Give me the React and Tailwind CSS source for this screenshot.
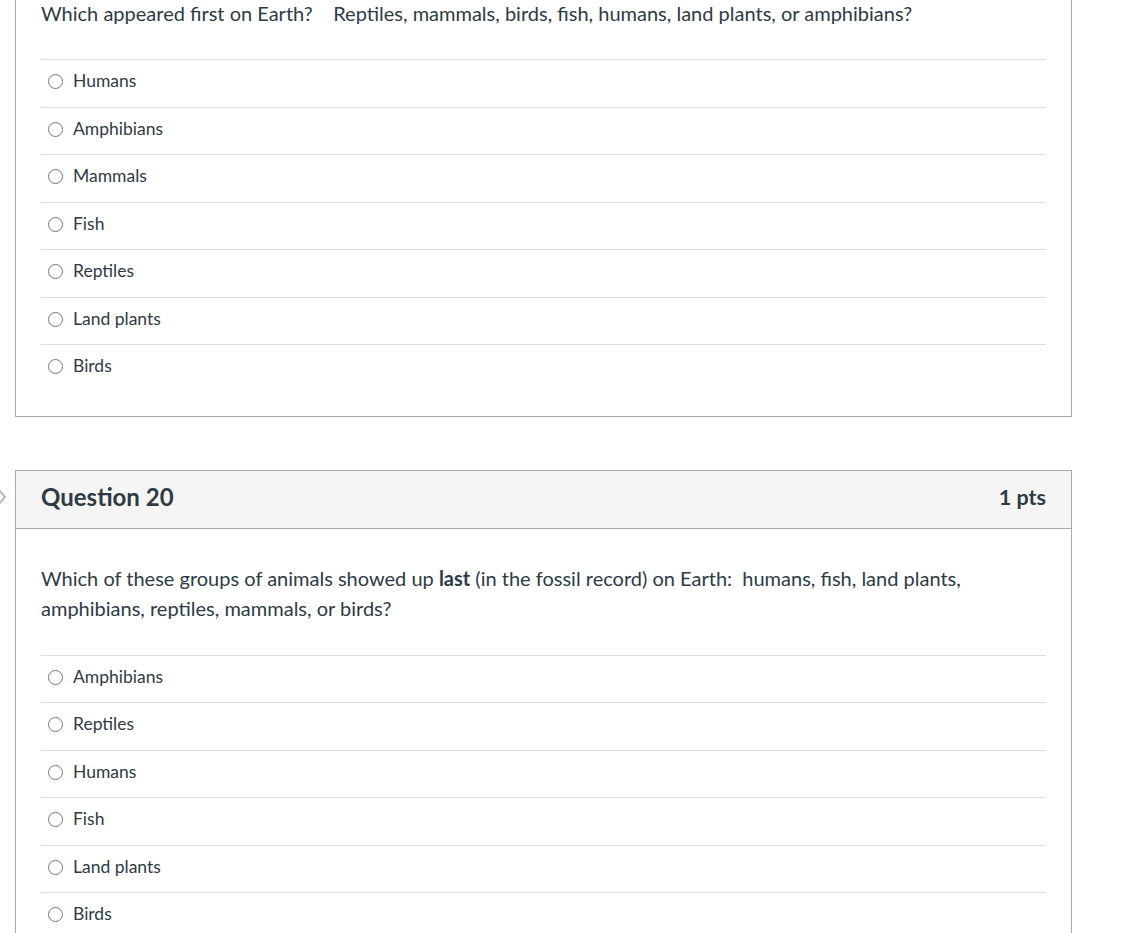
import React from "react";

const first = ["Humans", "Amphibians", "Mammals", "Fish", "Reptiles", "Land plants", "Birds"];
const second = ["Amphibians", "Reptiles", "Humans", "Fish", "Land plants", "Birds"];

const Answer = ({ label }) => (
  <div className="flex items-start border-t border-[#dddddd] pl-[7px] pt-[9px] pb-[13.5px]">
    <span className="mt-[5px] h-[15px] w-[15px] shrink-0 rounded-full border-[1.5px] border-[#777777] bg-white" />
    <span className="ml-[10px] text-[17.5px] leading-[24px]">{label}</span>
  </div>
);

const Header = ({ title }) => (
  <div className="flex h-[58px] items-start justify-between border-b border-[#aaaaaa] bg-[#f5f5f5] px-[25px] pt-[11px]">
    <h2 className="text-[24px] leading-[30px] font-bold">{title}</h2>
    <span className="text-[21.5px] leading-[30px] font-bold">1 pts</span>
  </div>
);

const App = () => {
  return (
    <div
      className="min-h-screen overflow-hidden bg-white text-[#2d3b45]"
      style={{ fontFamily: "Lato, 'Open Sans', sans-serif" }}
    >
      <div className="mt-[-95px] pl-[15px] w-[1072px]">
        {/* Question 19 (scrolled past its header) */}
        <div className="border border-[#aaaaaa]">
          <Header title="Question 19" />
          <div className="px-[25px] pt-[34px] pb-[24px]">
            <p className="text-[20px] leading-[30px] mb-[31px]">
              Which appeared first on Earth?&nbsp;&nbsp;&nbsp; Reptiles, mammals, birds, fish, humans, land plants, or amphibians?
            </p>
            <div>
              {first.map((a) => (
                <Answer key={a} label={a} />
              ))}
            </div>
          </div>
        </div>

        {/* Question 20 */}
        <div className="relative mt-[53px] border border-[#aaaaaa]">
          <svg
            className="absolute left-[-20px] top-[16px]"
            width="12"
            height="20"
            viewBox="0 0 12 20"
            fill="none"
          >
            <path d="M3 3 L9 10 L3 17" stroke="#a9bccb" strokeWidth="2" strokeLinejoin="round" />
          </svg>
          <Header title="Question 20" />
          <div className="px-[25px] pt-[34px] pb-[24px]">
            <p className="text-[20px] leading-[30px] mb-[32px]">
              Which of these groups of animals showed up <strong className="font-bold">last</strong> (in the fossil record) on Earth:&nbsp; humans, fish, land plants, amphibians, reptiles, mammals, or birds?
            </p>
            <div>
              {second.map((a) => (
                <Answer key={a} label={a} />
              ))}
            </div>
          </div>
        </div>
      </div>
    </div>
  );
};

export default App;
